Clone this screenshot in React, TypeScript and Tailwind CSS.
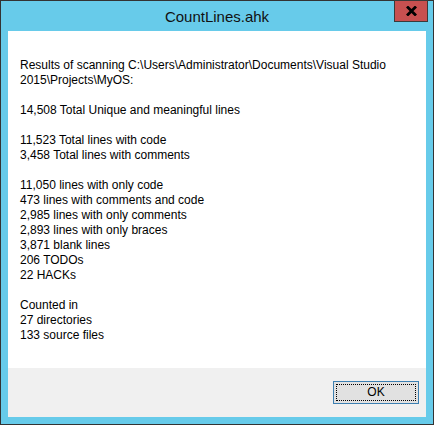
import React from "react";

const lines: (string | null)[] = [
  "Results of scanning C:\\Users\\Administrator\\Documents\\Visual Studio",
  "2015\\Projects\\MyOS:",
  null,
  "14,508 Total Unique and meaningful lines",
  null,
  "11,523 Total lines with code",
  "3,458 Total lines with comments",
  null,
  "11,050 lines with only code",
  "473 lines with comments and code",
  "2,985 lines with only comments",
  "2,893 lines with only braces",
  "3,871 blank lines",
  "206 TODOs",
  "22 HACKs",
  null,
  "Counted in",
  "27 directories",
  "133 source files",
];

export default function App() {
  return (
    <div className="w-[434px] h-[425px] border border-[#333333] bg-[#67cbea] flex flex-col">
      {/* title bar */}
      <div className="relative h-[30px] shrink-0">
        <div
          className="absolute inset-x-0 top-[6px] text-center text-[15px] leading-[20px] text-[#111]"
          style={{ fontFamily: '"Liberation Sans", Arial, sans-serif' }}
        >
          CountLines.ahk
        </div>
        <div className="absolute right-[5px] top-[-1px] w-[34px] h-[22px] bg-[#c75050] border border-[#3a3a3a] flex items-center justify-center">
          <svg width="11" height="10" viewBox="0 0 11 10">
            <path d="M1 0.5 L10 9.5 M10 0.5 L1 9.5" stroke="#000" strokeWidth="2.8" />
          </svg>
        </div>
      </div>

      {/* client */}
      <div
        className="mx-[7px] mb-[7px] flex-1 flex flex-col text-[12px] leading-[15px] text-black"
        style={{ fontFamily: '"Liberation Sans", Arial, sans-serif' }}
      >
        <div className="bg-white h-[337px] pt-[27px] pl-[12px]">
          {lines.map((l, i) => (
            <div key={i} className="h-[15px] whitespace-nowrap">
              {l ?? "\u00a0"}
            </div>
          ))}
        </div>
        <div className="flex-1 bg-[#f0f0f0] flex justify-end items-start pt-[13px] pr-[7px]">
          <button className="w-[86px] h-[23px] border border-[#3c7fb1] bg-[#e1e1e1] p-[2px]">
            <div className="w-full h-full border border-dotted border-black flex items-center justify-center text-[12px]">
              OK
            </div>
          </button>
        </div>
      </div>
    </div>
  );
}
